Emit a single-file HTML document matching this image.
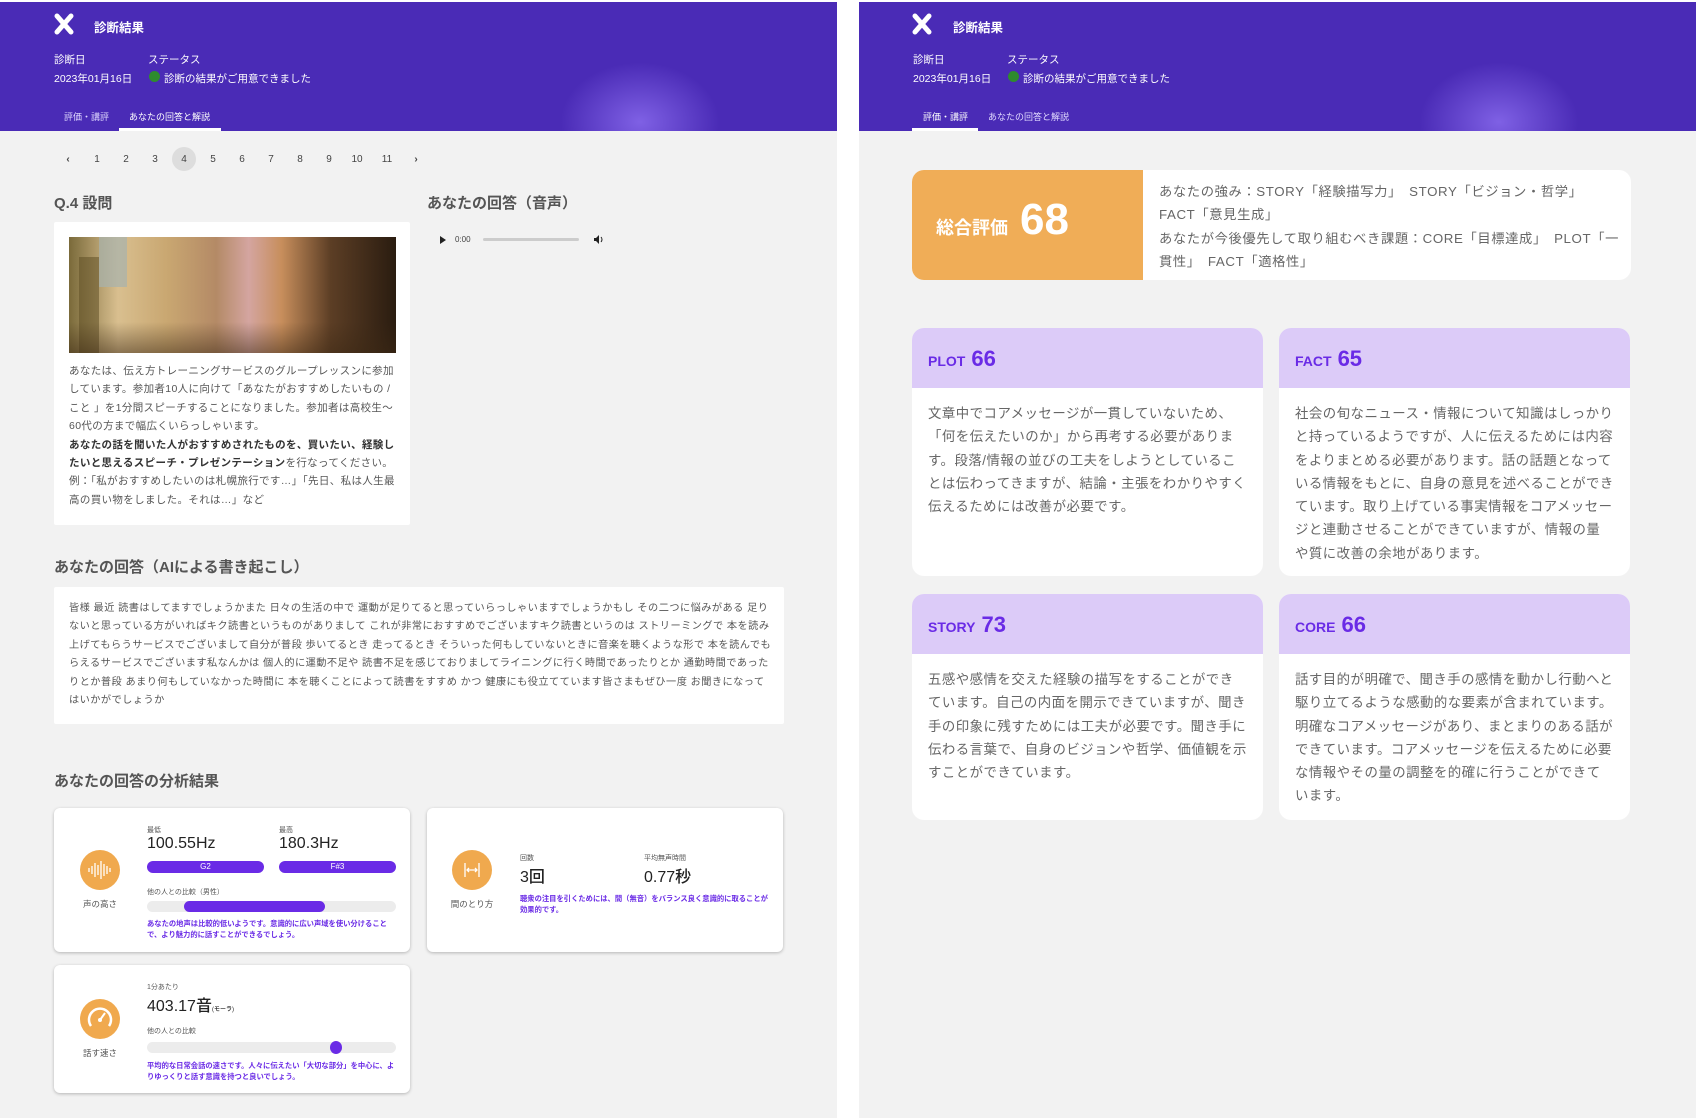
<!DOCTYPE html>
<html><head><meta charset="utf-8"><style>
*{margin:0;padding:0;box-sizing:border-box}
body{width:1698px;height:1118px;background:#fff;font-family:"Liberation Sans","Noto Sans CJK JP",sans-serif;position:relative;overflow:hidden;color:#555}
.abs{position:absolute}
.panel{position:absolute;top:2px;height:1116px;background:#f2f2f2;overflow:hidden}
.hdr{position:absolute;left:0;top:0;width:100%;height:129px;background:#4a2bb6;overflow:hidden}
.glow{position:absolute;left:560px;top:60px;width:160px;height:120px;border-radius:50%;background:radial-gradient(ellipse at center,rgba(140,110,240,.8),rgba(74,43,182,0) 70%)}
.w{color:#fff}
.card{position:absolute;background:#fff;border-radius:6px}
.shadow{box-shadow:0 1px 3px rgba(0,0,0,.25)}
.pg{position:absolute;top:150px;font-size:10px;color:#444;width:24px;text-align:center;line-height:16px}
.h2{position:absolute;font-size:15px;font-weight:bold;color:#555}
.q{font-size:10.5px;line-height:18.4px;color:#555;letter-spacing:.35px}
.tr{font-size:10.2px;line-height:18.4px;color:#555;letter-spacing:.45px}
.tiny{font-size:7px;color:#555}
.big{font-size:16px;color:#222;font-weight:500}
.pill{position:absolute;height:12px;border-radius:6px;background:#6a2be6;color:#fff;font-size:8px;text-align:center;line-height:12px}
.bar{position:absolute;height:11px;border-radius:6px;background:#ececec}
.pt{position:absolute;font-size:7.3px;line-height:11px;color:#6a2be6;font-weight:bold}
.ic{position:absolute;width:40px;height:40px;border-radius:50%;background:#f0a94e}
.lbl{position:absolute;font-size:8.5px;color:#555;width:60px;text-align:center}
.sc{position:absolute;background:#fff;border-radius:12px;overflow:hidden}
.sch{height:60px;background:#dccbf8;padding:18px 16px 0;font-size:14px;color:#6a2be6;font-weight:bold}
.sch b{font-size:22px;margin-left:6px;font-weight:900}
.scb{padding:14px 16px 0;font-size:13.4px;line-height:23.3px;color:#666;letter-spacing:.5px}
</style></head><body>

<!-- LEFT PANEL -->
<div class="panel" style="left:0;width:837px">
 <div class="hdr"><div class="glow"></div>
  <svg class="abs" style="left:54px;top:11px" width="20" height="22" viewBox="0 0 20 22"><path d="M3 3 L17 19 M17 3 L3 19" stroke="#fff" stroke-width="5" stroke-linecap="round"/></svg>
  <div class="abs w" style="left:94px;top:15px;font-size:12.5px;font-weight:bold">診断結果</div>
  <div class="abs w" style="left:54px;top:50px;font-size:10.5px">診断日</div>
  <div class="abs w" style="left:148px;top:50px;font-size:10.5px">ステータス</div>
  <div class="abs w" style="left:54px;top:69px;font-size:10.5px">2023年01月16日</div>
  <div class="abs" style="left:149px;top:69px;width:11px;height:11px;border-radius:50%;background:#2e8b2e"></div>
  <div class="abs w" style="left:164px;top:69px;font-size:10.5px">診断の結果がご用意できました</div>
  <div class="abs" style="left:64px;top:108px;font-size:9px;color:#e0d8ff">評価・講評</div>
  <div class="abs w" style="left:129px;top:108px;font-size:9px">あなたの回答と解説</div>
  <div class="abs" style="left:119px;top:126px;width:102px;height:3px;background:#fff"></div>
 </div>
 <div class="abs" style="left:172px;top:145px;width:24px;height:24px;border-radius:50%;background:#ddd"></div>
 <div class="pg" style="left:56px;font-weight:bold">‹</div><div class="pg" style="left:85px">1</div><div class="pg" style="left:114px">2</div><div class="pg" style="left:143px">3</div><div class="pg" style="left:172px">4</div><div class="pg" style="left:201px">5</div><div class="pg" style="left:230px">6</div><div class="pg" style="left:259px">7</div><div class="pg" style="left:288px">8</div><div class="pg" style="left:317px">9</div><div class="pg" style="left:345px">10</div><div class="pg" style="left:375px">11</div><div class="pg" style="left:404px;font-weight:bold">›</div>

 <div class="h2" style="left:54px;top:190px">Q.4 設問</div>
 <div class="h2" style="left:427px;top:190px">あなたの回答（音声）</div>
 <div class="card" style="left:54px;top:220px;width:356px;height:303px;border-radius:2px">
  <div class="abs" style="left:15px;top:15px;width:327px;height:116px;overflow:hidden;background:linear-gradient(90deg,#7a6a3a 0%,#d9bf8f 15%,#c9a771 30%,#b48a66 45%,#d4a5a0 55%,#c78e5c 65%,#5c3e25 80%,#2a1c10 100%)">
   <div class="abs" style="left:30px;top:0;width:28px;height:50px;background:#a6b2ae;opacity:.7"></div>
   <div class="abs" style="left:10px;top:20px;width:20px;height:96px;background:#5a4a20;opacity:.5"></div>
   <div class="abs" style="left:0;top:85px;width:327px;height:31px;background:linear-gradient(180deg,rgba(0,0,0,0),rgba(60,40,20,.5))"></div>
  </div>
  <div class="abs q" style="left:15px;top:140px;width:330px">あなたは、伝え方トレーニングサービスのグループレッスンに参加しています。参加者10人に向けて「あなたがおすすめしたいもの / こと 」を1分間スピーチすることになりました。参加者は高校生〜60代の方まで幅広くいらっしゃいます。<br><b style="color:#333">あなたの話を聞いた人がおすすめされたものを、買いたい、経験したいと思えるスピーチ・プレゼンテーション</b>を行なってください。<br>例：「私がおすすめしたいのは札幌旅行です…」「先日、私は人生最高の買い物をしました。それは…」など</div>
 </div>
 <svg class="abs" style="left:439px;top:233px" width="8" height="10"><path d="M1 1 L7 5 L1 9Z" fill="#222"/></svg>
 <div class="abs" style="left:455px;top:233px;font-size:8px;color:#444">0:00</div>
 <div class="abs" style="left:483px;top:236px;width:96px;height:3px;border-radius:2px;background:#ccc"></div>
 <svg class="abs" style="left:593px;top:232px" width="12" height="11"><path d="M1 4 H3 L6 1 V10 L3 7 H1Z" fill="#222"/><path d="M8 3 Q10 5.5 8 8" stroke="#222" fill="none"/></svg>

 <div class="h2" style="left:54px;top:554px">あなたの回答（AIによる書き起こし）</div>
 <div class="card" style="left:54px;top:585px;width:730px;height:137px;border-radius:2px">
  <div class="abs tr" style="left:15px;top:13px;width:705px">皆様 最近 読書はしてますでしょうかまた 日々の生活の中で 運動が足りてると思っていらっしゃいますでしょうかもし その二つに悩みがある 足りないと思っている方がいればキク読書というものがありまして これが非常におすすめでございますキク読書というのは ストリーミングで 本を読み上げてもらうサービスでございまして自分が普段 歩いてるとき 走ってるとき そういった何もしていないときに音楽を聴くような形で 本を読んでもらえるサービスでございます私なんかは 個人的に運動不足や 読書不足を感じておりましてライニングに行く時間であったりとか 通勤時間であったりとか普段 あまり何もしていなかった時間に 本を聴くことによって読書をすすめ かつ 健康にも役立てています皆さまもぜひ一度 お聞きになってはいかがでしょうか</div>
 </div>

 <div class="h2" style="left:54px;top:768px">あなたの回答の分析結果</div>

 <div class="card shadow" style="left:54px;top:806px;width:356px;height:144px">
  <div class="ic" style="left:26px;top:42px"><svg width="40" height="40"><path d="M9 18v4M12 16v8M15 13v14M18 15v10M21 11v18M24 14v12M27 16v8M30 18v4" stroke="#fff" stroke-width="1.3"/></svg></div>
  <div class="lbl" style="left:16px;top:90px">声の高さ</div>
  <div class="abs tiny" style="left:93px;top:17px">最低</div>
  <div class="abs big" style="left:93px;top:27px">100.55Hz</div>
  <div class="abs tiny" style="left:225px;top:17px">最高</div>
  <div class="abs big" style="left:225px;top:27px">180.3Hz</div>
  <div class="pill" style="left:93px;top:53px;width:117px">G2</div>
  <div class="pill" style="left:225px;top:53px;width:117px">F#3</div>
  <div class="abs tiny" style="left:93px;top:79px">他の人との比較（男性）</div>
  <div class="bar" style="left:93px;top:93px;width:249px"></div>
  <div class="bar" style="left:130px;top:93px;width:141px;background:#6a2be6"></div>
  <div class="pt" style="left:93px;top:110px;width:250px">あなたの地声は比較的低いようです。意識的に広い声域を使い分けることで、より魅力的に話すことができるでしょう。</div>
 </div>

 <div class="card shadow" style="left:427px;top:806px;width:356px;height:144px">
  <div class="ic" style="left:25px;top:42px"><svg width="40" height="40"><path d="M13 13v14M27 13v14M16 20h8M17 18l-2 2 2 2M23 18l2 2-2 2" stroke="#fff" stroke-width="1.3" fill="none"/></svg></div>
  <div class="lbl" style="left:15px;top:90px">間のとり方</div>
  <div class="abs tiny" style="left:93px;top:45px">回数</div>
  <div class="abs big" style="left:93px;top:55px">3回</div>
  <div class="abs tiny" style="left:217px;top:45px">平均無声時間</div>
  <div class="abs big" style="left:217px;top:55px">0.77秒</div>
  <div class="pt" style="left:93px;top:85px;width:250px">聴衆の注目を引くためには、間（無音）をバランス良く意識的に取ることが効果的です。</div>
 </div>

 <div class="card shadow" style="left:54px;top:963px;width:356px;height:128px">
  <div class="ic" style="left:26px;top:34px"><svg width="40" height="40"><path d="M11 27 A11 11 0 1 1 29 27" stroke="#fff" stroke-width="2.5" fill="none"/><path d="M20 21 L25 14" stroke="#fff" stroke-width="2"/><circle cx="20" cy="21" r="2" fill="#fff"/></svg></div>
  <div class="lbl" style="left:16px;top:82px">話す速さ</div>
  <div class="abs tiny" style="left:93px;top:17px">1分あたり</div>
  <div class="abs big" style="left:93px;top:27px">403.17音<span style="font-size:6px">(モーラ)</span></div>
  <div class="abs tiny" style="left:93px;top:61px">他の人との比較</div>
  <div class="bar" style="left:93px;top:77px;width:249px"></div>
  <div class="abs" style="left:276px;top:76px;width:12px;height:13px;border-radius:50%;background:#6a2be6"></div>
  <div class="pt" style="left:93px;top:95px;width:250px">平均的な日常会話の速さです。人々に伝えたい「大切な部分」を中心に、よりゆっくりと話す意識を持つと良いでしょう。</div>
 </div>
</div>

<!-- RIGHT PANEL -->
<div class="panel" style="left:859px;width:837px">
 <div class="hdr"><div class="glow"></div>
  <svg class="abs" style="left:53px;top:11px" width="20" height="22" viewBox="0 0 20 22"><path d="M3 3 L17 19 M17 3 L3 19" stroke="#fff" stroke-width="5" stroke-linecap="round"/></svg>
  <div class="abs w" style="left:94px;top:15px;font-size:12.5px;font-weight:bold">診断結果</div>
  <div class="abs w" style="left:54px;top:50px;font-size:10.5px">診断日</div>
  <div class="abs w" style="left:148px;top:50px;font-size:10.5px">ステータス</div>
  <div class="abs w" style="left:54px;top:69px;font-size:10.5px">2023年01月16日</div>
  <div class="abs" style="left:149px;top:69px;width:11px;height:11px;border-radius:50%;background:#2e8b2e"></div>
  <div class="abs w" style="left:164px;top:69px;font-size:10.5px">診断の結果がご用意できました</div>
  <div class="abs w" style="left:64px;top:108px;font-size:9px">評価・講評</div>
  <div class="abs" style="left:129px;top:108px;font-size:9px;color:#e0d8ff">あなたの回答と解説</div>
  <div class="abs" style="left:53px;top:126px;width:66px;height:3px;background:#fff"></div>
 </div>

 <div class="card" style="left:53px;top:168px;width:719px;height:110px;border-radius:12px;overflow:hidden">
  <div class="abs" style="left:0;top:0;width:231px;height:110px;background:#f0ad57"></div>
  <div class="abs w" style="left:24px;top:44px;font-size:18px;font-weight:bold">総合評価</div>
  <div class="abs w" style="left:108px;top:25px;font-size:44px;font-weight:900">68</div>
  <div class="abs" style="left:247px;top:10px;width:462px;font-size:13.3px;line-height:23.3px;color:#666;letter-spacing:.6px">あなたの強み：STORY「経験描写力」　STORY「ビジョン・哲学」<br>FACT「意見生成」<br>あなたが今後優先して取り組むべき課題：CORE「目標達成」　PLOT「一貫性」　FACT「適格性」</div>
 </div>

 <div class="sc" style="left:53px;top:326px;width:351px;height:248px">
  <div class="sch">PLOT<b>66</b></div>
  <div class="scb">文章中でコアメッセージが一貫していないため、<br>「何を伝えたいのか」から再考する必要があります。段落/情報の並びの工夫をしようとしていることは伝わってきますが、結論・主張をわかりやすく伝えるためには改善が必要です。</div>
 </div>
 <div class="sc" style="left:420px;top:326px;width:351px;height:248px">
  <div class="sch">FACT<b>65</b></div>
  <div class="scb">社会の旬なニュース・情報について知識はしっかりと持っているようですが、人に伝えるためには内容をよりまとめる必要があります。話の話題となっている情報をもとに、自身の意見を述べることができています。取り上げている事実情報をコアメッセージと連動させることができていますが、情報の量や質に改善の余地があります。</div>
 </div>
 <div class="sc" style="left:53px;top:592px;width:351px;height:226px">
  <div class="sch">STORY<b>73</b></div>
  <div class="scb">五感や感情を交えた経験の描写をすることができています。自己の内面を開示できていますが、聞き手の印象に残すためには工夫が必要です。聞き手に伝わる言葉で、自身のビジョンや哲学、価値観を示すことができています。</div>
 </div>
 <div class="sc" style="left:420px;top:592px;width:351px;height:226px">
  <div class="sch">CORE<b>66</b></div>
  <div class="scb">話す目的が明確で、聞き手の感情を動かし行動へと駆り立てるような感動的な要素が含まれています。明確なコアメッセージがあり、まとまりのある話ができています。コアメッセージを伝えるために必要な情報やその量の調整を的確に行うことができています。</div>
 </div>
</div>
</body></html>
